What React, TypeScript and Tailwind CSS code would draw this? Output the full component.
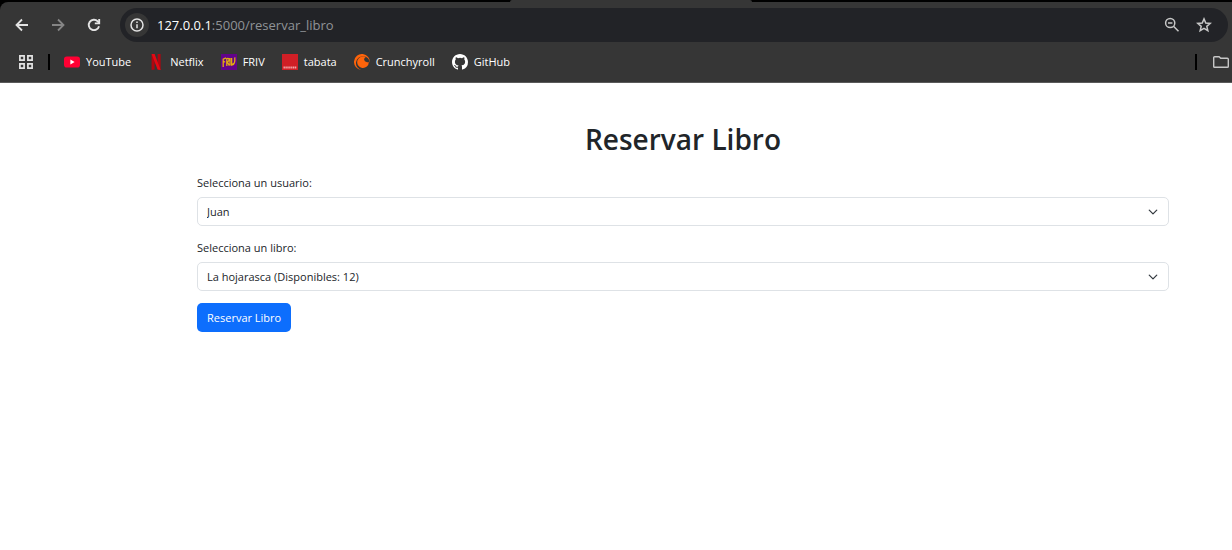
import type { ReactNode } from "react";

function BackIcon({ className }: { className: string }) {
  return (
    <svg viewBox="0 0 16 16" className={className} fill="none" stroke="currentColor" strokeWidth="1.8" aria-hidden="true">
      <path d="M14 8H3M8 2.5 2.5 8 8 13.5" />
    </svg>
  );
}

function ReloadIcon() {
  return (
    <svg viewBox="0 0 16 16" className="size-4" fill="none" stroke="currentColor" strokeWidth="1.9" aria-hidden="true">
      <path d="M13 9.2A5.2 5.2 0 1 1 11.7 4.3L13 5.6" />
      <path d="M13.2 2v4.4H8.8" />
    </svg>
  );
}

function InfoIcon() {
  return (
    <svg viewBox="0 0 16 16" className="size-4" fill="none" stroke="currentColor" strokeWidth="1.5" aria-hidden="true">
      <circle cx="8" cy="8" r="6" />
      <path d="M8 7.2v4M8 4.6v1.5" />
    </svg>
  );
}

function ZoomOutIcon() {
  return (
    <svg viewBox="0 0 16 16" className="size-4" fill="none" stroke="currentColor" strokeWidth="1.5" aria-hidden="true">
      <circle cx="6.2" cy="6" r="4.6" />
      <path d="M4 6h4.4M9.5 9.3l5 5" />
    </svg>
  );
}

function StarIcon() {
  return (
    <svg viewBox="0 0 16 16" className="size-4" fill="none" stroke="currentColor" strokeWidth="1.5" aria-hidden="true">
      <path d="m8 1.9 1.75 4.1 4.45.4-3.4 2.95 1.05 4.35L8 11.4l-3.85 2.3L5.2 9.35 1.8 6.4 6.25 6z" />
    </svg>
  );
}

function AppsIcon() {
  return (
    <svg viewBox="0 0 16 16" className="size-4" fill="none" stroke="currentColor" strokeWidth="1.7" aria-hidden="true">
      <path d="M1.9 1.9h4.2v4.2H1.9zM9.9 1.9h4.2v4.2H9.9zM1.9 9.9h4.2v4.2H1.9zM9.9 9.9h4.2v4.2H9.9z" />
    </svg>
  );
}

function FolderIcon() {
  return (
    <svg viewBox="0 0 16 16" className="size-4" fill="none" stroke="currentColor" strokeWidth="1.4" aria-hidden="true">
      <path d="M1.6 2.7h4.5l1.6 1.6h6.7q.9 0 .9.9v7.2q0 .9-.9.9H1.6q-.9 0-.9-.9V3.6q0-.9.9-.9z" />
    </svg>
  );
}

function YouTubeIcon() {
  return (
    <svg viewBox="0 0 16 16" className="size-4" aria-hidden="true">
      <rect x="0" y="2.4" width="16" height="11.2" rx="2.8" fill="#ff0033" />
      <path d="m6.4 5.6 4.2 2.4-4.2 2.4z" fill="#fff" />
    </svg>
  );
}

function NetflixIcon() {
  return (
    <svg viewBox="0 0 16 16" className="size-4" aria-hidden="true">
      <path d="M3.6 0h3v15.6l-3 .4zM9.6 0h3v16l-3-.4z" fill="#b1060f" />
      <path d="M3.6 0h3l6 16-3-.4z" fill="#e50914" />
    </svg>
  );
}

function FrivIcon() {
  return (
    <svg viewBox="0 0 16 16" className="size-4" aria-hidden="true">
      <rect width="16" height="16" fill="#62048a" />
      <path
        d="M2.2 13V5.2L5 3.8M2.2 8.2l2-.6M5.8 12V4.6c3-1 3 2.4.6 3.4l2 3.6M9 4v7.5M10.6 4v7l2-1.6M13.8 3.4c.3 4-.2 7-2.4 7.6"
        fill="none"
        stroke="#e2ac10"
        strokeWidth="1.3"
      />
    </svg>
  );
}

function TabataIcon() {
  return (
    <svg viewBox="0 0 16 16" className="size-4" aria-hidden="true">
      <rect width="16" height="16" fill="#d01f26" />
      <path d="M1.5 13.5h13" stroke="#f0a6a9" strokeWidth="1.8" strokeDasharray="1.4 .5" />
    </svg>
  );
}

function CrunchyrollIcon() {
  return (
    <svg viewBox="0 0 16 16" className="size-4" fill="#ff640a" aria-hidden="true">
      <path d="M15.95 8.8A8 8 0 1 0 7.2 15.96 7 7 0 1 1 15.95 8.8z" />
      <path d="M12.5 8.1a2.6 2.6 0 0 1-.7-5A5.8 5.8 0 1 0 14.8 8a2.6 2.6 0 0 1-2.3.1z" />
    </svg>
  );
}

function GitHubIcon() {
  return (
    <svg viewBox="0 0 16 16" className="size-4" fill="#fff" aria-hidden="true">
      <path d="M8 0C3.58 0 0 3.58 0 8c0 3.54 2.29 6.53 5.47 7.59.4.07.55-.17.55-.38 0-.19-.01-.82-.01-1.49-2.01.37-2.53-.49-2.69-.94-.09-.23-.48-.94-.82-1.13-.28-.15-.68-.52-.01-.53.63-.01 1.08.58 1.23.82.72 1.21 1.87.87 2.33.66.07-.52.28-.87.51-1.07-1.78-.2-3.64-.89-3.64-3.95 0-.87.31-1.59.82-2.15-.08-.2-.36-1.02.08-2.12 0 0 .67-.21 2.2.82a7.6 7.6 0 0 1 4 0c1.53-1.04 2.2-.82 2.2-.82.44 1.1.16 1.92.08 2.12.51.56.82 1.27.82 2.15 0 3.07-1.87 3.75-3.65 3.95.29.25.54.73.54 1.48 0 1.07-.01 1.93-.01 2.2 0 .21.15.46.55.38A8 8 0 0 0 16 8c0-4.42-3.58-8-8-8z" />
    </svg>
  );
}

const bookmarks: { name: string; href: string; icon: ReactNode }[] = [
  { name: "YouTube", href: "#youtube", icon: <YouTubeIcon /> },
  { name: "Netflix", href: "#netflix", icon: <NetflixIcon /> },
  { name: "FRIV", href: "#friv", icon: <FrivIcon /> },
  { name: "tabata", href: "#tabata", icon: <TabataIcon /> },
  { name: "Crunchyroll", href: "#crunchyroll", icon: <CrunchyrollIcon /> },
  { name: "GitHub", href: "#github", icon: <GitHubIcon /> },
];

function BrowserBar() {
  return (
    <header className="border-b border-[#5a5a5a] bg-black">
      <div className="flex h-0.5">
        <div className="flex-[510]" />
        <div className="flex-[242] rounded-t-sm bg-[#363636]" />
        <div className="flex-[480]" />
      </div>
      <div className="rounded-tl-lg bg-[#363636] pt-1.5">
        <div className="flex items-center pr-1 pl-3.5">
          <div className="flex flex-1 items-center gap-5 text-[#e3e3e3]">
            <button type="button" aria-label="Atrás"><BackIcon className="size-4" /></button>
            <button type="button" aria-label="Adelante" disabled className="text-[#858585]">
              <BackIcon className="size-4 rotate-180" />
            </button>
            <button type="button" aria-label="Recargar"><ReloadIcon /></button>
            <div className="-ml-0.5 flex h-[34px] flex-1 items-center rounded-full bg-[#222327] pr-4 pl-[5px]">
              <button
                type="button"
                aria-label="Información del sitio"
                className="mr-2 flex size-6 items-center justify-center rounded-full bg-[#363636]"
              >
                <InfoIcon />
              </button>
              <p className="flex-1 text-[13px] leading-5 text-[#909397]">
                <span className="font-medium text-white">127.0.0.1</span>:5000/reservar_libro
              </p>
              <div className="flex gap-4 text-[#c7c7c7]">
                <button type="button" aria-label="Zoom"><ZoomOutIcon /></button>
                <button type="button" aria-label="Añadir a favoritos"><StarIcon /></button>
              </div>
            </div>
          </div>
        </div>
        <nav className="flex h-10 items-center pl-[18px] text-[11px] font-medium text-white" aria-label="Marcadores">
          <button type="button" aria-label="Aplicaciones" className="text-[#e3e3e3]"><AppsIcon /></button>
          <div className="ml-3.5 h-4 w-0.5 bg-black" />
          <ul className="ml-3.5 flex flex-1 gap-[17px]">
            {bookmarks.map((b) => (
              <li key={b.name}>
                <a href={b.href} className="flex items-center gap-1.5">
                  {b.icon}
                  {b.name}
                </a>
              </li>
            ))}
          </ul>
          <div className="mr-4 h-4 w-0.5 bg-black" />
          <button type="button" aria-label="Todos los marcadores" className="mr-[3px] text-[#c7c7c7]"><FolderIcon /></button>
        </nav>
      </div>
    </header>
  );
}

function SelectField({ id, label, options }: { id: string; label: string; options: string[] }) {
  return (
    <div className="mb-3">
      <label htmlFor={id} className="mb-1 block leading-5">{label}</label>
      <div className="grid items-center">
        <select
          id={id}
          className="col-start-1 row-start-1 h-[29px] w-full appearance-none rounded-[5px] border border-[#dee2e6] bg-white px-[9px] pt-0.5"
        >
          {options.map((o) => (
            <option key={o}>{o}</option>
          ))}
        </select>
        <svg
          viewBox="0 0 16 16"
          className="pointer-events-none col-start-1 row-start-1 mr-[11px] size-2.5 justify-self-end"
          fill="none"
          stroke="#343a40"
          strokeWidth="2"
          strokeLinecap="round"
          strokeLinejoin="round"
          aria-hidden="true"
        >
          <path d="m2 5 6 6 6-6" />
        </svg>
      </div>
    </div>
  );
}

export default function App() {
  return (
    <div className="min-h-screen bg-white font-['Open_Sans','Noto_Sans',sans-serif]">
      <BrowserBar />
      <main className="pt-[38px] pr-[63px] pl-[197px] text-[11px] text-[#212529]">
        <h1 className="mb-4 text-center text-[28px] leading-9 font-semibold">Reservar Libro</h1>
        <form onSubmit={(e) => e.preventDefault()}>
          <SelectField id="usuario" label="Selecciona un usuario:" options={["Juan"]} />
          <SelectField id="libro" label="Selecciona un libro:" options={["La hojarasca (Disponibles: 12)"]} />
          <button type="submit" className="h-[29px] rounded-[5px] bg-[#0d6efd] px-2.5 pt-0.5 text-white">
            Reservar Libro
          </button>
        </form>
      </main>
    </div>
  );
}
